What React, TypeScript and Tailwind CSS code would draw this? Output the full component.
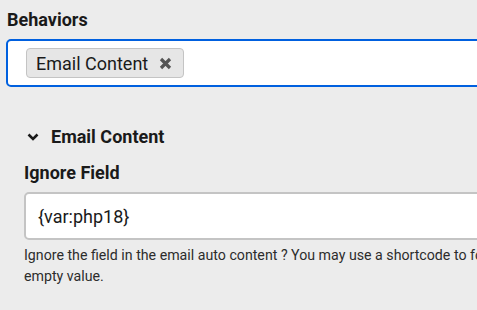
import React from "react";

export default function App() {
  return (
    <div className="w-[477px] h-[310px] overflow-hidden bg-[#ececec] font-['Roboto',sans-serif] text-[#1a1a1a]">
      <div className="w-[760px]">
        <div className="ml-[7px] mt-[8px] text-[18px] leading-[24px] font-bold">Behaviors</div>
        <div className="ml-[6px] mt-[7px] h-[48px] border-2 border-[#0060df] rounded-[5px] bg-white flex items-center pl-[18px]">
          <div className="h-[30px] flex items-center border border-[#c4c4c4] bg-[#e6e6e6] rounded-[4px] pl-[9px] pr-[11px] text-[18px]">
            <span>Email Content</span>
            <svg className="ml-[11px]" width="13" height="13" viewBox="0 0 13 13">
              <path d="M2 2 L11 11 M11 2 L2 11" stroke="#555" strokeWidth="3.2" strokeLinecap="butt" />
            </svg>
          </div>
        </div>
        <div className="ml-[27px] mt-[38px] flex items-center h-[24px]">
          <svg width="12" height="8" viewBox="0 0 12 8">
            <path d="M1.5 1.5 L6 6 L10.5 1.5" stroke="#1a1a1a" strokeWidth="2.6" fill="none" />
          </svg>
          <span className="ml-[12px] text-[18px] leading-[24px] font-bold">Email Content</span>
        </div>
        <div className="ml-[24px] mt-[12px] text-[18px] leading-[24px] font-bold">Ignore Field</div>
        <div className="ml-[24px] mt-[7px] h-[48px] border-2 border-[#c4c4c4] rounded-[5px] bg-white flex items-center pl-[12px] text-[18px]">
          {"{var:php18}"}
        </div>
        <div className="ml-[24px] mt-[5px] w-[525px] text-[14.2px] leading-[21px] text-[#2c2c2c]">
          Ignore the field in the email auto content ? You may use a shortcode to force an empty value.
        </div>
      </div>
    </div>
  );
}
